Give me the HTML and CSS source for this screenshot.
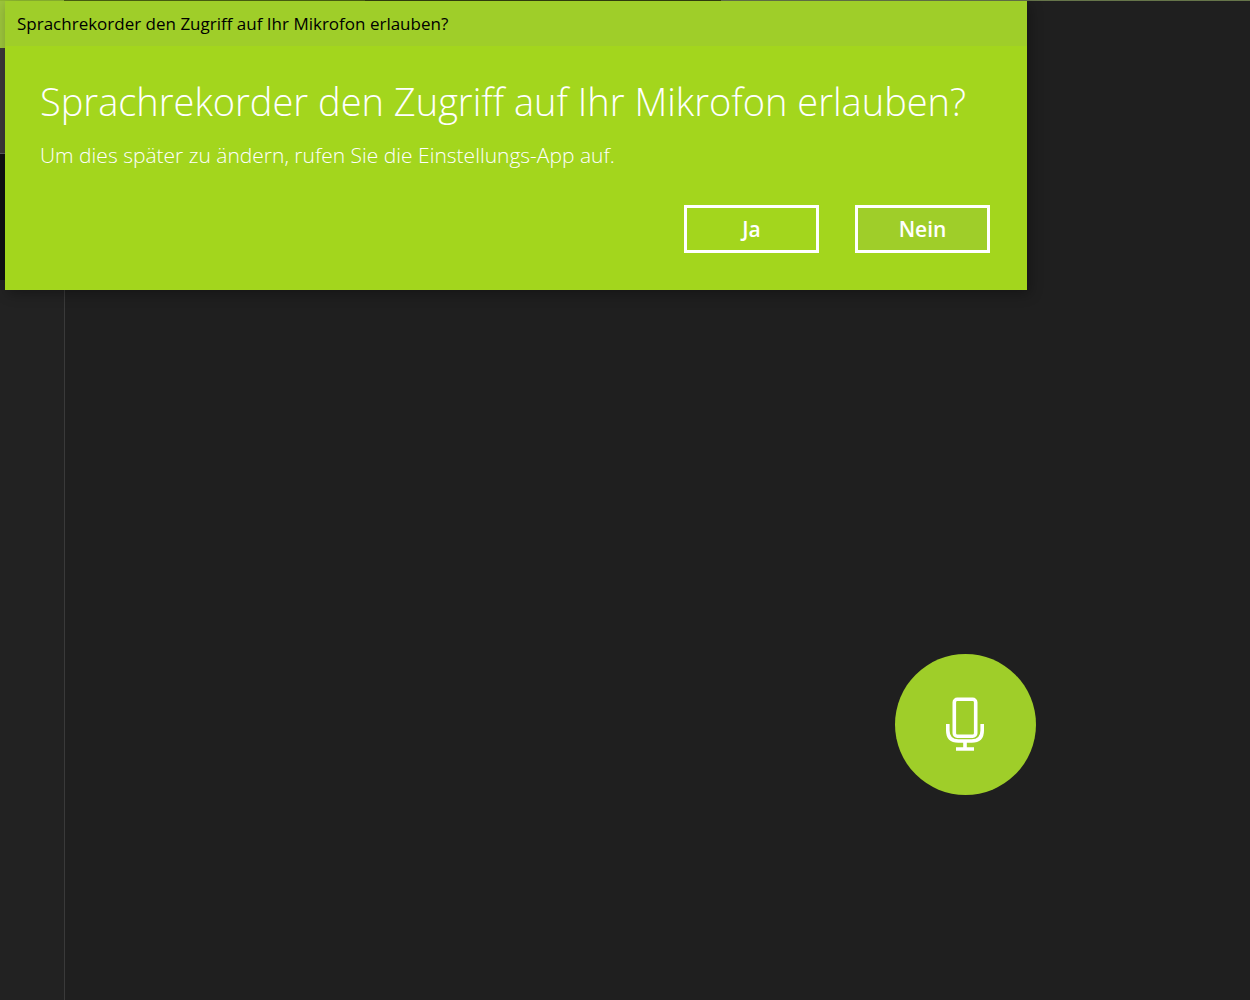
FILE: index.html
```
<!DOCTYPE html>
<html lang="de">
<head>
  <meta charset="UTF-8">
  <meta name="viewport" content="width=device-width, initial-scale=1.0">
  <title>Sprachrekorder</title>
  <link rel="stylesheet" href="styles.css">
</head>
<body>
  <div class="top-strip">
    <span class="strip-menu"></span>
    <span class="strip-dark"></span>
    <span class="strip-mid"></span>
    <span class="strip-light"></span>
  </div>

  <div class="app">
    <aside class="sidebar">
      <div class="side-accent"></div>
      <div class="side-header"></div>
      <div class="side-item"></div>
    </aside>
    <main class="recorder">
      <button class="record-btn" aria-label="Aufnehmen">
        <svg width="41" height="57" viewBox="0 0 41 57" fill="none" stroke="#fff" stroke-width="3.6">
          <rect x="9.3" y="3.3" width="21.4" height="36.9" rx="3"></rect>
          <path d="M2.8 28v6.500q0 10.500 10.500 10.500h13.400q10.500 0 10.500-10.500v-6.500"></path>
          <path d="M20 45v7M11 53h18"></path>
        </svg>
      </button>
    </main>
  </div>

  <div class="dialog" role="dialog" aria-labelledby="question">
    <div class="titlebar">Sprachrekorder den Zugriff auf Ihr Mikrofon erlauben?</div>
    <div class="dialog-body">
      <h1 id="question">Sprachrekorder den Zugriff auf Ihr Mikrofon erlauben?</h1>
      <p>Um dies später zu ändern, rufen Sie die Einstellungs-App auf.</p>
      <div class="btn-group">
        <button class="btn">Ja</button>
        <button class="btn btn-default">Nein</button>
      </div>
    </div>
  </div>
</body>
</html>
```
FILE: styles.css
```
* {
  box-sizing: border-box;
}
body {
  font-family: 'Open Sans', 'Noto Sans', sans-serif;
  background-color: #1f1f1f;
  color: #fff;
  margin: 0;
  display: flex;
  flex-direction: column;
  min-height: 100vh;
}
.top-strip {
  display: flex;
  height: 1px;
}
.strip-menu {
  width: 64px;
  background-color: #8fb830;
}
.strip-dark {
  width: 301px;
  background-color: #4c6212;
}
.strip-mid {
  width: 356px;
  background-color: #33400f;
}
.strip-light {
  flex: 1;
  background-color: #66754a;
}
.app {
  display: flex;
  flex: 1;
}
.sidebar {
  width: 65px;
  background-color: #222;
  border-right: 1px solid #3a3a3a;
}
.side-accent {
  height: 47px;
  background-color: #9cc43c;
}
.side-header {
  height: 106px;
  background-color: #3c3938;
  border-bottom: 1px solid #5c5c5c;
}
.side-item {
  height: 126px;
  background-color: #111;
}
.recorder {
  flex: 1;
  display: flex;
  justify-content: flex-end;
  align-items: flex-end;
  padding: 0 214px 205px 0;
}
.record-btn {
  display: flex;
  justify-content: center;
  align-items: center;
  width: 141px;
  height: 141px;
  padding: 0;
  border: none;
  border-radius: 50%;
  background-color: #9fce29;
  cursor: pointer;
}
.dialog {
  position: absolute;
  top: 1px;
  left: 5px;
  width: 1022px;
  max-width: calc(100% - 10px);
  background-color: #a3d61d;
  box-shadow: 3px 4px 12px rgba(0, 0, 0, 0.3);
}
.titlebar {
  padding: 0 12px;
  line-height: 45px;
  font-size: 17px;
  color: #000;
  background-color: #9fce29;
}
.dialog-body {
  padding: 27px 37px 37px 35px;
}
.dialog-body h1 {
  margin: 0;
  font-size: 38px;
  font-weight: 300;
  line-height: 56px;
}
.dialog-body p {
  margin: 10px 0 34px;
  font-size: 21px;
  font-weight: 300;
  line-height: 32px;
}
.btn-group {
  display: flex;
  justify-content: flex-end;
  gap: 36px;
}
.btn {
  width: 135px;
  height: 48px;
  padding: 0;
  border: 3px solid #fff;
  background-color: transparent;
  color: #fff;
  font-family: inherit;
  font-size: 21px;
  font-weight: 600;
  cursor: pointer;
}
.btn-default,
.btn:hover {
  background-color: #9fce29;
}
```
